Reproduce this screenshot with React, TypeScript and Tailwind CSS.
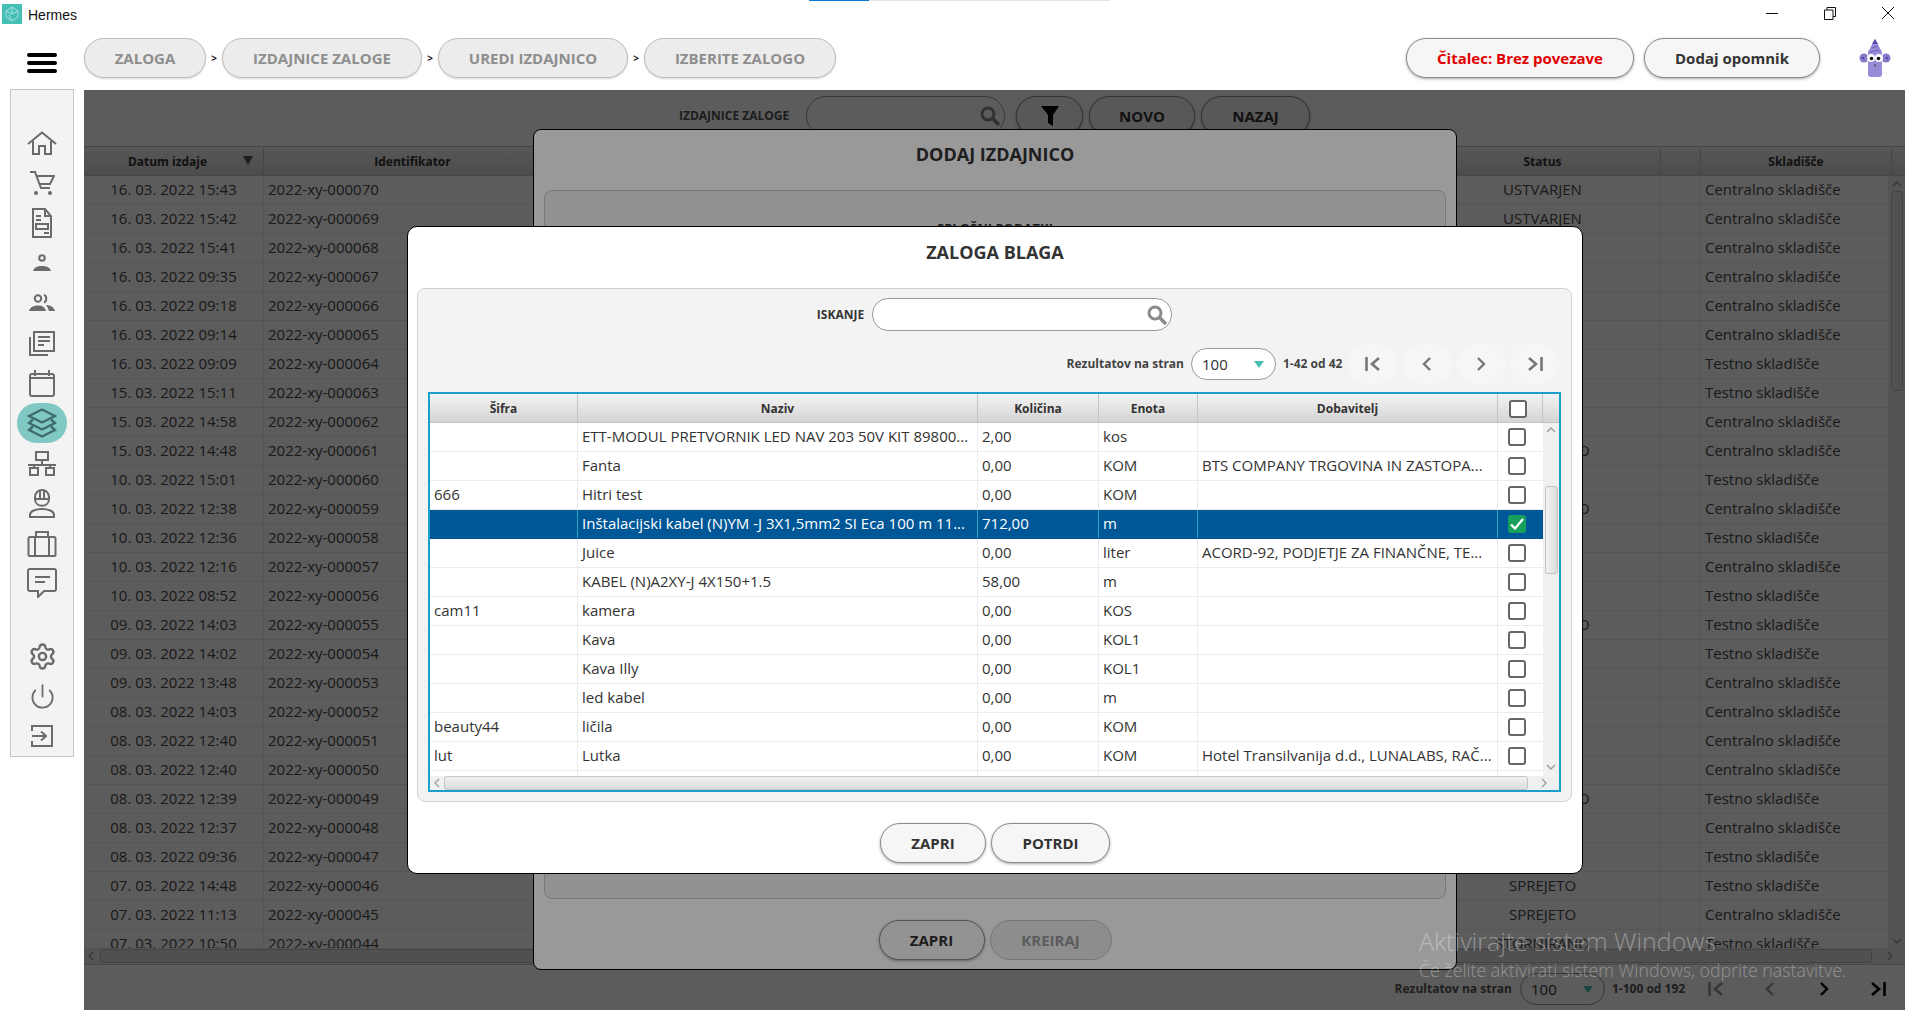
import { Power, Settings } from "lucide-react";

const FONT = "font-['Open_Sans','Noto_Sans',sans-serif]";

const ISSUES: [string, string, string, string][] = [
  ["16. 03. 2022 15:43", "000070", "USTVARJEN", "Centralno skladišče"],
  ["16. 03. 2022 15:42", "000069", "USTVARJEN", "Centralno skladišče"],
  ["16. 03. 2022 15:41", "000068", "USTVARJEN", "Centralno skladišče"],
  ["16. 03. 2022 09:35", "000067", "USTVARJEN", "Centralno skladišče"],
  ["16. 03. 2022 09:18", "000066", "USTVARJEN", "Centralno skladišče"],
  ["16. 03. 2022 09:14", "000065", "USTVARJEN", "Centralno skladišče"],
  ["16. 03. 2022 09:09", "000064", "USTVARJEN", "Testno skladišče"],
  ["15. 03. 2022 15:11", "000063", "USTVARJEN", "Testno skladišče"],
  ["15. 03. 2022 14:58", "000062", "USTVARJEN", "Centralno skladišče"],
  ["15. 03. 2022 14:48", "000061", "STORNIRANO", "Centralno skladišče"],
  ["10. 03. 2022 15:01", "000060", "USTVARJEN", "Testno skladišče"],
  ["10. 03. 2022 12:38", "000059", "STORNIRANO", "Centralno skladišče"],
  ["10. 03. 2022 12:36", "000058", "USTVARJEN", "Testno skladišče"],
  ["10. 03. 2022 12:16", "000057", "USTVARJEN", "Centralno skladišče"],
  ["10. 03. 2022 08:52", "000056", "USTVARJEN", "Testno skladišče"],
  ["09. 03. 2022 14:03", "000055", "STORNIRANO", "Testno skladišče"],
  ["09. 03. 2022 14:02", "000054", "USTVARJEN", "Testno skladišče"],
  ["09. 03. 2022 13:48", "000053", "USTVARJEN", "Centralno skladišče"],
  ["08. 03. 2022 14:03", "000052", "USTVARJEN", "Centralno skladišče"],
  ["08. 03. 2022 12:40", "000051", "USTVARJEN", "Centralno skladišče"],
  ["08. 03. 2022 12:40", "000050", "USTVARJEN", "Centralno skladišče"],
  ["08. 03. 2022 12:39", "000049", "STORNIRANO", "Testno skladišče"],
  ["08. 03. 2022 12:37", "000048", "USTVARJEN", "Centralno skladišče"],
  ["08. 03. 2022 09:36", "000047", "USTVARJEN", "Testno skladišče"],
  ["07. 03. 2022 14:48", "000046", "SPREJETO", "Testno skladišče"],
  ["07. 03. 2022 11:13", "000045", "SPREJETO", "Centralno skladišče"],
  ["07. 03. 2022 10:50", "000044", "STORNIRANO", "Testno skladišče"],
];

const STOCK: [string, string, string, string, string][] = [
  ["", "ETT-MODUL PRETVORNIK LED NAV 203 50V KIT 89800...", "2,00", "kos", ""],
  ["", "Fanta", "0,00", "KOM", "BTS COMPANY TRGOVINA IN ZASTOPA..."],
  ["666", "Hitri test", "0,00", "KOM", ""],
  ["", "Inštalacijski kabel (N)YM -J 3X1,5mm2 SI Eca 100 m 11...", "712,00", "m", ""],
  ["", "Juice", "0,00", "liter", "ACORD-92, PODJETJE ZA FINANČNE, TE..."],
  ["", "KABEL (N)A2XY-J 4X150+1.5", "58,00", "m", ""],
  ["cam11", "kamera", "0,00", "KOS", ""],
  ["", "Kava", "0,00", "KOL1", ""],
  ["", "Kava Illy", "0,00", "KOL1", ""],
  ["", "led kabel", "0,00", "m", ""],
  ["beauty44", "ličila", "0,00", "KOM", ""],
  ["lut", "Lutka", "0,00", "KOM", "Hotel Transilvanija d.d., LUNALABS, RAČ..."],
  ["", "", "", "", ""],
];

const Ico = ({ w, h, children }: { w: number; h: number; children: React.ReactNode }) => (
  <svg width={w} height={h} viewBox={`0 0 ${w} ${h}`} fill="none" stroke="#6b6b6b" strokeWidth="2">
    {children}
  </svg>
);

const sideIcons = [
  <Ico w={30} h={24} key="home">
    <path d="M1 13 15 1.500 29 13M6 10v13h6v-8h6v8h6V10" />
  </Ico>,
  <Ico w={26} h={26} key="cart">
    <path d="M1 2h5l6 16h9M7 6h18l-4 8H10" />
    <circle cx="7" cy="23" r="2" fill="#6b6b6b" stroke="none" />
    <circle cx="21" cy="23" r="2" fill="#6b6b6b" stroke="none" />
  </Ico>,
  <Ico w={22} h={30} key="doc">
    <path d="M2 1h12l6 7v21H2zM14 1v7h6M5 8h5M5 12h5M5 16h12v5H5zM13 25h5" />
  </Ico>,
  <Ico w={18} h={18} key="user">
    <circle cx="9" cy="4" r="2.800" />
    <path d="M0 17c1-4 5-5 9-5s8 1 9 5z" fill="#6b6b6b" stroke="none" />
  </Ico>,
  <Ico w={26} h={18} key="users">
    <circle cx="9" cy="4.500" r="3.200" />
    <path d="M15 1c3 .5 3 6.500 0 7.500" />
    <path d="M0 17c1-4 5-5.500 9-5.500s7 1.500 8 5.500zM17 11c4 0 8 2 9 6h-6c-.500-2-1.500-4-3-6z" fill="#6b6b6b" stroke="none" />
  </Ico>,
  <Ico w={26} h={26} key="copy">
    <path d="M5 2h20v19H5zM1 7v18h18M9 7h12M9 11h12M9 15h6" />
  </Ico>,
  <Ico w={26} h={28} key="calendar">
    <rect x="1" y="5" width="24" height="22" rx="2" />
    <path d="M6 1v6M20 1v6M1 9h24" />
  </Ico>,
  <svg width="30" height="30" viewBox="0 0 30 30" fill="none" stroke="#3f6b6b" strokeWidth="2.400" key="layers">
    <path d="M15 1.500 28 8 15 14.500 2 8z" />
    <path d="M6 11.500 2 15l13 6.500L28 15l-4-3.500" />
    <path d="M6 18.500 2 22l13 6.500L28 22l-4-3.500" />
  </svg>,
  <Ico w={30} h={25} key="network">
    <path d="M9 1h12v8H9zM15 9v5M1 14h28M7 14v3M23 14v3M3 17h8v7H3zM19 17h8v7h-8z" />
  </Ico>,
  <Ico w={26} h={30} key="worker">
    <path d="M6 11V9a7 7 0 0 1 14 0v2zM6 11c0 9 14 9 14 0M11 3v7M15 3v7" />
    <path d="M1 29v-2c0-4 6-6 12-6s12 2 12 6v2z" />
  </Ico>,
  <Ico w={30} h={27} key="case">
    <rect x="1.500" y="7" width="27" height="19" rx="1.500" />
    <path d="M9 7V2h12v5M8 7v19M22 7v19" />
  </Ico>,
  <Ico w={30} h={30} key="message">
    <path d="M3 1h24a2 2 0 0 1 2 2v18a2 2 0 0 1-2 2H17l-6 6v-6H3a2 2 0 0 1-2-2V3a2 2 0 0 1 2-2z" />
    <path d="M8 9h15M8 14h10" />
  </Ico>,
];

const Sidebar = () => (
  <aside className="ml-[10px] -mt-px w-[64px] h-[668px] bg-[#f3f3f3] border border-[#c6c6c6] flex flex-col items-center pt-[33px] shrink-0">
    {sideIcons.map((icon, i) => (
      <div
        key={i}
        className={`w-[50px] h-[40px] flex items-center justify-center rounded-full shrink-0 ${i === 7 ? "bg-[#7fc8c3]" : ""}`}
      >
        {icon}
      </div>
    ))}
    <div className="h-[33px] shrink-0" />
    <div className="h-[40px] flex items-center justify-center shrink-0">
      <Settings size={29} color="#6b6b6b" strokeWidth={2} />
    </div>
    <div className="h-[40px] flex items-center justify-center shrink-0">
      <Power size={27} color="#6b6b6b" strokeWidth={1.600} />
    </div>
    <div className="h-[40px] flex items-center justify-center shrink-0">
      <Ico w={22} h={22} key="logout">
        <path d="M1 6V1h20v20H1v-5M1 11h13M10 6.500l5 4.500-5 4.500" />
      </Ico>
    </div>
  </aside>
);

const Pill = ({
  children,
  className = "",
}: {
  children: React.ReactNode;
  className?: string;
}) => (
  <div
    className={`h-[40px] shrink-0 rounded-[20px] border flex items-center justify-center text-[15px] font-bold ${className}`}
  >
    {children}
  </div>
);

const LightBtn = ({ label, className = "" }: { label: string; className?: string }) => (
  <Pill className={`bg-[#f6f6f6] border-[#8c8c8c] text-[#333] shadow-[0_1px_3px_rgba(0,0,0,.35)] ${className}`}>
    {label}
  </Pill>
);

const PageBtn = ({ kind, color, bg }: { kind: "first" | "prev" | "next" | "last"; color: string; bg?: string }) => {
  const d = {
    first: "M2.500 1v14M15 2 8 8l7 6",
    prev: "M12 2 6 8l6 6",
    next: "M6 2l6 6-6 6",
    last: "M15.500 1v14M3 2l7 6-7 6",
  }[kind];
  return (
    <div className={`w-[50px] h-[40px] rounded-full flex items-center justify-center ${bg ?? ""}`}>
      <svg width="18" height="16" viewBox="0 0 18 16" fill="none" stroke={color} strokeWidth={kind === "first" || kind === "last" ? 2.600 : 2.400}>
        <path d={d} />
      </svg>
    </div>
  );
};

const SelectBox = ({ arrow }: { arrow: string }) => (
  <div className="w-[85px] h-[32px] rounded-[16px] border border-[#999] bg-white flex items-center justify-between pl-[10px] pr-[11px] text-[15px] text-[#333]">
    100
    <svg width="10" height="7" viewBox="0 0 10 7">
      <path d="M0 0h10L5 7z" fill={arrow} />
    </svg>
  </div>
);

const SearchIcon = () => (
  <svg width="22" height="22" viewBox="0 0 22 22" fill="none" stroke="#8a8a8a">
    <circle cx="9" cy="9" r="6" strokeWidth="3" />
    <path d="M13.500 13.500 20 20" strokeWidth="3.500" />
  </svg>
);

const headCell = "flex items-center justify-center h-full pt-px border-r border-[#c4c4c4] text-[12px] font-bold text-[#333] shrink-0";
const headBg = "bg-gradient-to-b from-[#f4f4f4] to-[#d4d4d4]";

const Arrow = ({ d, stroke = "#9a9a9a" }: { d: string; stroke?: string }) => (
  <svg width="10" height="10" viewBox="0 0 10 10" fill="none" stroke={stroke} strokeWidth="1.300">
    <path d={d} />
  </svg>
);

const IssuesPage = () => (
  <div className="h-full bg-white flex flex-col text-[#4a4a4a]">
    <div className="h-[56px] pt-[6px] flex justify-center shrink-0">
      <span className="h-[40px] w-[110px] flex items-center text-[12px] font-bold text-[#555] whitespace-nowrap">IZDAJNICE ZALOGE</span>
      <div className="ml-[17px] w-[199px] h-[40px] rounded-[20px] border border-[#999] bg-white flex items-center justify-end pr-[3px]">
        <SearchIcon />
      </div>
      <Pill className="ml-[11px] w-[67px] bg-[#f6f6f6] border-[#8c8c8c] shadow-[0_1px_3px_rgba(0,0,0,.35)]">
        <svg width="18" height="20" viewBox="0 0 18 20">
          <path d="M0 0h18l-6 9v11l-5-3V9z" fill="#000" />
        </svg>
      </Pill>
      <LightBtn label="NOVO" className="ml-[6px] w-[106px]" />
      <LightBtn label="NAZAJ" className="ml-[6px] w-[109px]" />
    </div>
    <div className={`h-[30px] flex shrink-0 border-y border-[#c4c4c4] ${headBg}`}>
      <div className={`${headCell} w-[180px] relative pr-[12px]`}>
        Datum izdaje
        <svg className="absolute right-[10px] top-[9px]" width="10" height="9" viewBox="0 0 10 9">
          <path d="M0 0h10L5 9z" fill="#555" />
        </svg>
      </div>
      <div className={`${headCell} w-[298px]`}>Identifikator</div>
      <div className={`${headCell} w-[863px]`} />
      <div className={`${headCell} w-[236px]`}>Status</div>
      <div className={`${headCell} w-[40px]`} />
      <div className={`${headCell} w-[191px]`}>Skladišče</div>
    </div>
    <div className="h-[772px] flex shrink-0 overflow-hidden">
      <div className="flex-1 overflow-hidden">
        {ISSUES.map((r) => (
          <div key={r[1]} className="h-[29px] flex items-center border-b border-[#ececec] text-[15px]">
            <div className="w-[180px] h-full flex items-center justify-center pb-[2px] border-r border-[#ececec] shrink-0">{r[0]}</div>
            <div className="w-[298px] h-full flex items-center pl-[4px] pb-[2px] border-r border-[#ececec] shrink-0">2022-xy-{r[1]}</div>
            <div className="w-[863px] h-full border-r border-[#ececec] shrink-0" />
            <div className="w-[236px] h-full flex items-center justify-center pb-[2px] border-r border-[#ececec] shrink-0">{r[2]}</div>
            <div className="w-[40px] h-full border-r border-[#ececec] shrink-0" />
            <div className="flex-1 h-full flex items-center pl-[4px] pb-[2px]">{r[3]}</div>
          </div>
        ))}
      </div>
      <div className="w-[17px] bg-[#ececec] flex flex-col items-center shrink-0">
        <div className="h-[15px] flex items-center">
          <Arrow d="M1 7l4-4 4 4" />
        </div>
        <div className="w-[12px] h-[200px] rounded-[3px] bg-[#e2e2e2] border border-[#bbb]" />
        <div className="mt-auto h-[15px] flex items-center">
          <Arrow d="M1 3l4 4 4-4" />
        </div>
      </div>
    </div>
    <div className="h-[17px] flex items-center gap-[3px] bg-[#ececec] border-b border-[#ccc] shrink-0">
      <div className="w-[13px] flex justify-center"><Arrow d="M7 1 3 5l4 4" /></div>
      <div className="flex-1 h-[14px] rounded-[3px] bg-[#e0e0e0] border border-[#bbb]" />
      <div className="w-[30px] flex justify-center"><Arrow d="M3 1l4 4-4 4" /></div>
    </div>
    <div className="flex-1 flex justify-end items-center pr-[2px] pt-[3px]">
      <span className="text-[12px] font-bold text-[#555] whitespace-nowrap">Rezultatov na stran</span>
      <div className="ml-[8px]"><SelectBox arrow="#4cc0b4" /></div>
      <span className="ml-[7px] w-[79px] text-[12px] font-bold text-[#555] whitespace-nowrap">1-100 od 192</span>
      <PageBtn kind="first" color="#999" />
      <div className="w-[4px]" />
      <PageBtn kind="prev" color="#999" />
      <div className="w-[4px]" />
      <PageBtn kind="next" color="#000" />
      <div className="w-[4px]" />
      <PageBtn kind="last" color="#000" />
    </div>
  </div>
);

const AddIssueDialog = () => (
  <div className="absolute left-[449px] top-[39px] w-[924px] h-[841px] bg-white border border-black rounded-[8px] flex flex-col items-center">
    <div className="h-[60px] w-full flex items-center justify-center text-[18px] font-bold text-[#333] pb-[11px]">DODAJ IZDAJNICO</div>
    <div className="w-[902px] h-[709px] rounded-[8px] border border-[#c8c8c8] bg-[#f3f3f3] pt-[28px] text-center text-[13px] font-bold text-[#333]">
      SPLOŠNI PODATKI
    </div>
    <div className="mt-[21px] flex gap-[5px]">
      <LightBtn label="ZAPRI" className="w-[106px]" />
      <Pill className="w-[122px] bg-[#ececec] border-[#c4c4c4] text-[#9a9a9a]">KREIRAJ</Pill>
    </div>
  </div>
);

const Check = ({ on = false }: { on?: boolean }) =>
  on ? (
    <div className="w-[18px] h-[18px] rounded-[3px] bg-[#16a05c] flex items-center justify-center">
      <svg width="14" height="12" viewBox="0 0 14 12" fill="none" stroke="#fff" strokeWidth="2.200">
        <path d="M1 6.500 5 10.500 13 1" />
      </svg>
    </div>
  ) : (
    <div className="w-[18px] h-[18px] rounded-[3px] border-2 border-[#666] bg-white" />
  );

const StockDialog = () => (
  <div className={`absolute left-[323px] top-[136px] w-[1176px] h-[648px] bg-white border border-black rounded-[10px] flex flex-col ${FONT}`}>
    <div className="h-[61px] flex items-center justify-center text-[18px] font-bold text-[#333] pb-[11px] shrink-0">ZALOGA BLAGA</div>
    <div className="ml-[9px] mr-[10px] h-[514px] rounded-[8px] border border-[#d2d2d2] bg-[#f3f3f3] flex flex-col shrink-0">
      <div className="pt-[9px] flex justify-center items-center">
        <span className="text-[12px] font-bold text-[#333]">ISKANJE</span>
        <div className="ml-[8px] w-[300px] h-[33px] rounded-[16px] border border-[#999] bg-white flex items-center justify-end pr-[3px]">
          <SearchIcon />
        </div>
      </div>
      <div className="mt-[13px] pr-[11px] flex justify-end items-center">
        <span className="text-[12px] font-bold text-[#444] whitespace-nowrap">Rezultatov na stran</span>
        <div className="ml-[7px]"><SelectBox arrow="#4cc0b4" /></div>
        <span className="ml-[7px] w-[65px] text-[12px] font-bold text-[#444] whitespace-nowrap">1-42 od 42</span>
        <div className="flex gap-[4px]">
          <PageBtn kind="first" color="#777" bg="bg-[#f6f6f6]" />
          <PageBtn kind="prev" color="#777" bg="bg-[#f6f6f6]" />
          <PageBtn kind="next" color="#777" bg="bg-[#f6f6f6]" />
          <PageBtn kind="last" color="#777" bg="bg-[#f6f6f6]" />
        </div>
      </div>
      <div className="mt-[8px] ml-[10px] w-[1133px] h-[400px] border-2 border-[#1ba1c9] bg-white flex flex-col shrink-0">
        <div className={`h-[29px] flex shrink-0 border-b border-[#c4c4c4] ${headBg}`}>
          <div className={`${headCell} w-[148px]`}>Šifra</div>
          <div className={`${headCell} w-[400px]`}>Naziv</div>
          <div className={`${headCell} w-[121px]`}>Količina</div>
          <div className={`${headCell} w-[99px]`}>Enota</div>
          <div className={`${headCell} w-[300px]`}>Dobavitelj</div>
          <div className={`${headCell} w-[45px] justify-start pl-[11px]`}><Check /></div>
        </div>
        <div className="flex h-[353px] shrink-0">
          <div className="flex-1 overflow-hidden">
            {STOCK.map((r, i) => {
              const sel = i === 3;
              const line = sel ? "border-[#2ba6c9]" : "border-[#ececec]";
              const cell = `h-full flex items-center pl-[4px] pb-[2px] border-r shrink-0 whitespace-nowrap overflow-hidden ${line}`;
              return (
                <div
                  key={i}
                  className={`h-[29px] flex text-[15px] border-b ${sel ? "bg-[#005797] text-white border-[#005797]" : "text-[#333] border-[#ececec]"}`}
                >
                  <div className={`${cell} w-[148px]`}>{r[0]}</div>
                  <div className={`${cell} w-[400px]`}>{r[1]}</div>
                  <div className={`${cell} w-[121px]`}>{r[2]}</div>
                  <div className={`${cell} w-[99px]`}>{r[3]}</div>
                  <div className={`${cell} w-[300px]`}>{r[4]}</div>
                  <div className="w-[45px] h-full flex items-center pl-[10px] shrink-0">
                    {i < 12 && <Check on={sel} />}
                  </div>
                </div>
              );
            })}
          </div>
          <div className="w-[16px] bg-[#f0f0f0] flex flex-col items-center shrink-0">
            <div className="h-[14px] flex items-center"><Arrow d="M1 7l4-4 4 4" /></div>
            <div className="mt-[49px] w-[13px] h-[88px] rounded-[3px] bg-gradient-to-r from-[#f2f2f2] to-[#dcdcdc] border border-[#c4c4c4]" />
            <div className="mt-auto mb-[2px] h-[14px] flex items-center"><Arrow d="M1 3l4 4 4-4" /></div>
          </div>
        </div>
        <div className="flex-1 flex items-center bg-[#f0f0f0]">
          <div className="w-[14px] flex justify-center"><Arrow d="M7 1 3 5l4 4" /></div>
          <div className="w-[1084px] h-[14px] rounded-[3px] bg-gradient-to-b from-[#f2f2f2] to-[#dcdcdc] border border-[#c4c4c4]" />
          <div className="flex-1 flex justify-center"><Arrow d="M3 1l4 4-4 4" /></div>
        </div>
      </div>
    </div>
    <div className="mt-[21px] flex justify-center gap-[5px]">
      <LightBtn label="ZAPRI" className="w-[106px]" />
      <LightBtn label="POTRDI" className="w-[119px]" />
    </div>
  </div>
);

const Mascot = () => (
  <svg width="34" height="40" viewBox="0 0 34 40">
    <path d="M10 14 17 1l7 13v22a3 3 0 0 1-3 3h-8a3 3 0 0 1-3-3z" fill="#9a8bd8" />
    <path d="M14 6l3-5 3 5z" fill="#5b4aa8" />
    <circle cx="6" cy="20" r="4.500" fill="#8a7ac8" />
    <circle cx="28" cy="20" r="4.500" fill="#8a7ac8" />
    <circle cx="5" cy="20" r="1.300" fill="#5b4aa8" />
    <circle cx="29" cy="20" r="1.300" fill="#5b4aa8" />
    <circle cx="13" cy="20" r="4" fill="#fff" />
    <circle cx="21" cy="20" r="4" fill="#fff" />
    <circle cx="13.500" cy="20.500" r="1.800" fill="#111" />
    <circle cx="20.500" cy="20.500" r="1.800" fill="#111" />
    <path d="M17 26v3" stroke="#444" strokeWidth="1" />
    <path d="M12 14l9-2M14 10l6-2" stroke="#6f5fb8" strokeWidth="1" />
  </svg>
);

export default function App() {
  return (
    <div className={`relative w-[1920px] h-[1027px] bg-white overflow-hidden flex flex-col ${FONT}`}>
      <div className="relative h-[30px] flex items-center shrink-0">
        <div className="absolute top-0 left-[809px] w-[301px] h-px bg-[#e4e4e4]">
          <div className="w-[60px] h-px bg-[#0a78d7]" />
        </div>
        <div className="ml-[2px] mt-[-2px] w-[20px] h-[20px] bg-[#45c0b5] flex items-center justify-center">
          <svg width="16" height="16" viewBox="0 0 16 16" fill="none" stroke="#a8e0da" strokeWidth="1">
            <path d="M8 1 14 5v6l-6 4-6-4V5zM8 1v7M2 5l6 3 6-3M5 9l3 6" />
          </svg>
        </div>
        <span className="ml-[6px] text-[14px] text-[#111] font-['Liberation_Sans',sans-serif]">Hermes</span>
        <div className="ml-auto flex mt-[-4px]">
          <div className="w-[58px] h-[20px] flex items-center justify-center">
            <div className="w-[12px] h-px bg-[#111]" />
          </div>
          <div className="w-[58px] h-[20px] flex items-center justify-center">
            <svg width="12" height="13" viewBox="0 0 12 13" fill="none" stroke="#111">
              <path d="M3 3V.5h8.500v9H9M.5 3h8.500v9.500H.5z" />
            </svg>
          </div>
          <div className="w-[58px] mr-[3px] h-[20px] flex items-center justify-center">
            <svg width="14" height="14" viewBox="0 0 14 14" fill="none" stroke="#111">
              <path d="M1 1l12 12M13 1 1 13" />
            </svg>
          </div>
        </div>
      </div>
      <div className="h-[60px] pt-[8px] flex items-start shrink-0">
        <div className="ml-[27px] mt-[15px] w-[30px] flex flex-col gap-[4px]">
          <div className="h-[4px] rounded-[2px] bg-black" />
          <div className="h-[4px] rounded-[2px] bg-black" />
          <div className="h-[4px] rounded-[2px] bg-black" />
        </div>
        <div className="ml-[27px] flex items-center">
          {[
            ["ZALOGA", "w-[122px]"],
            ["IZDAJNICE ZALOGE", "w-[200px]"],
            ["UREDI IZDAJNICO", "w-[190px]"],
            ["IZBERITE ZALOGO", "w-[192px]"],
          ].map(([label, w], i) => (
            <div key={label} className="flex items-center">
              {i > 0 && <span className="w-[16px] text-center text-[10px] font-bold text-[#111]">&gt;</span>}
              <Pill className={`${w} bg-[#ececec] border-[#bdbdbd] text-[#8e8e8e] shadow-[0_1px_2px_rgba(0,0,0,.15)]`}>{label}</Pill>
            </div>
          ))}
        </div>
        <div className="ml-auto mr-[28px] flex items-center">
          <Pill className="w-[228px] bg-[#f6f6f6] border-[#8c8c8c] text-[#e00000] shadow-[0_1px_3px_rgba(0,0,0,.35)]">Čitalec: Brez povezave</Pill>
          <Pill className="ml-[10px] w-[176px] bg-[#f6f6f6] border-[#8c8c8c] text-[#333] shadow-[0_1px_3px_rgba(0,0,0,.35)]">Dodaj opomnik</Pill>
          <div className="ml-[38px] w-[34px]"><Mascot /></div>
        </div>
      </div>
      <div className="flex h-[920px] shrink-0">
        <Sidebar />
        <main className="relative ml-[10px] w-[1821px] h-[920px] overflow-hidden">
          <IssuesPage />
          <div className="absolute inset-0 bg-black/40" />
          <AddIssueDialog />
          <div className="absolute inset-0 bg-black/40" />
          <StockDialog />
        </main>
      </div>
      <div className="absolute left-[1419px] top-[924px] text-white/35 pointer-events-none font-light">
        <div className="text-[25px] leading-[34px]">Aktivirajte sistem Windows</div>
        <div className="text-[17.800px] leading-[22px] mt-[1px]">Če želite aktivirati sistem Windows, odprite nastavitve.</div>
      </div>
    </div>
  );
}
